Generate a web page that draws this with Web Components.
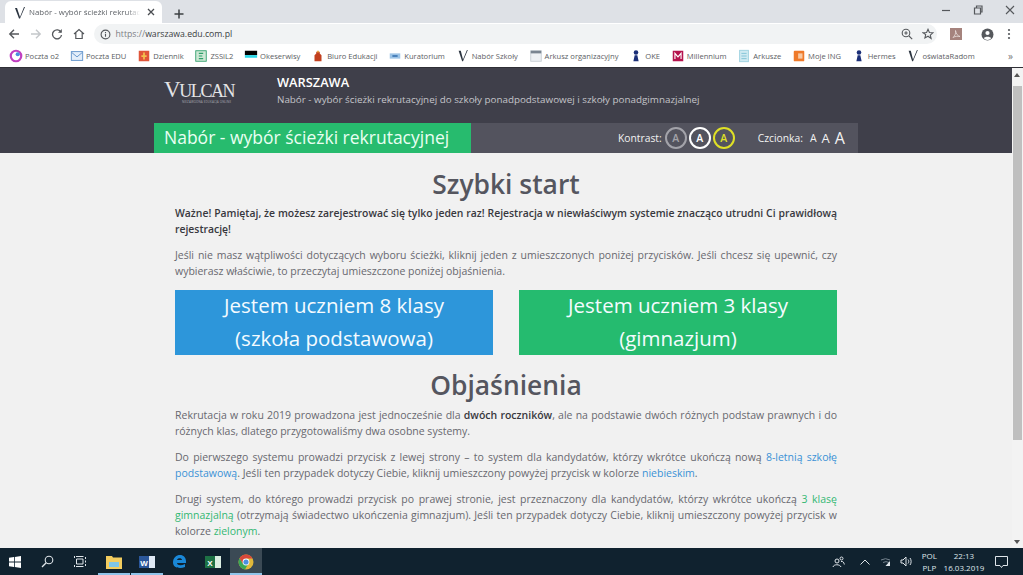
<!DOCTYPE html>
<html lang="pl">
<head>
<meta charset="utf-8">
<title>Nabór - wybór ścieżki rekrutacyjnej</title>
<style>
  html, body { margin: 0; height: 100%; overflow: hidden; }
  body { display: flex; flex-direction: column; height: 575px; font-family: "Open Sans", sans-serif; background: #f1f1f1; }
  page-main { flex: 1; min-height: 0; }
</style>
</head>
<body>
<browser-chrome></browser-chrome>
<page-main>
  <site-header></site-header>
  <article-body></article-body>
</page-main>
<task-bar></task-bar>

<script>
const vLogo = `<svg width="12" height="13" viewBox="0 0 12 13"><path d="M1 2 L3 2 L6 11 L10 1 L11 1 L6 12.5 L5 12.5 Z" fill="#2b3440"/></svg>`;

const bookmarks = [
  ["Poczta o2", `<circle cx="8" cy="8" r="6" fill="none" stroke="#c03fc0" stroke-width="2.5"/><circle cx="10" cy="6" r="2.4" fill="#4a8fe0"/>`],
  ["Poczta EDU", `<rect x="1.5" y="3" width="13" height="10" fill="#e3eefa" stroke="#5b8fc8"/><path d="M2 4l6 5 6-5" fill="none" stroke="#5b8fc8"/>`],
  ["Dziennik", `<rect x="2" y="2" width="12" height="12" fill="#e0553a"/><path d="M8 4v8M5 8h6" stroke="#f2c14e" stroke-width="2"/>`],
  ["ZSSiL2", `<rect x="2" y="2" width="12" height="12" fill="#cfe8d6" stroke="#2f9e6a"/><path d="M5.500 5h5M5.500 8h4M5.500 11h5" stroke="#2f9e6a" stroke-width="1.300"/>`],
  ["Okeserwisy", `<rect x="1" y="2" width="14" height="5" fill="#000"/><rect x="1" y="7" width="14" height="3" fill="#29d6e6"/>`],
  ["Biuro Edukacji", `<path d="M4 14V7l2-2V3h4v2l2 2v7z" fill="#c2401f"/><rect x="7" y="2" width="2" height="2" fill="#e8a33c"/>`],
  ["Kuratorium", `<rect x="2" y="5" width="12" height="6" fill="#9cc3e6"/><rect x="5" y="7" width="6" height="2" fill="#3f78b5"/>`],
  ["Nabór Szkoły", `<path d="M3 2 L5.500 2 L8 12 L12.500 1 L13.500 1 L8 14 L7 14 Z" fill="#2b3440"/>`],
  ["Arkusz organizacyjny", `<rect x="2" y="2" width="12" height="12" fill="#eef1f4" stroke="#c5ccd3"/><rect x="2" y="2" width="12" height="3" fill="#7a8591"/>`],
  ["OKE", `<circle cx="8" cy="4" r="2.600" fill="#1b2f78"/><path d="M5 14l1.500-7h3L11 14z" fill="#1b2f78"/>`],
  ["Millennium", `<rect x="2" y="2" width="12" height="12" fill="#b5134d"/><path d="M4.500 11.500V5l3.500 4 3.500-4v6.500" fill="none" stroke="#fff" stroke-width="1.300"/>`],
  ["Arkusze", `<rect x="3" y="1.500" width="10" height="13" fill="#cfeaf2" stroke="#9ad0df"/><path d="M5 5h6M5 8h6M5 11h6" stroke="#7cc0d4"/>`],
  ["Moje ING", `<rect x="2" y="2" width="12" height="12" rx="1" fill="#ef7a2a"/><rect x="7" y="5" width="5" height="6" fill="#f8c9a3"/>`],
  ["Hermes", `<circle cx="8" cy="4" r="2.600" fill="#1b2f78"/><path d="M5 14l1.500-7h3L11 14z" fill="#1b2f78"/>`],
  ["oświataRadom", `<path d="M3 2 L5.500 2 L8 12 L12.500 1 L13.500 1 L8 14 L7 14 Z" fill="#2b3440"/>`],
];

class BrowserChrome extends HTMLElement {
  constructor() {
    super();
    this.attachShadow({ mode: "open" });
  }

  connectedCallback() {
    const marks = bookmarks.map(([name, icon]) => `
      <span class="mark"><svg width="14" height="14" viewBox="0 0 16 16">${icon}</svg>${name}</span>`).join("");
    this.shadowRoot.innerHTML = `
      <style>
        :host { display: block; flex: none; font-family: "Open Sans", sans-serif; color: #4b4f54; }
        .tabs { height: 23px; background: #dee1e6; display: flex; align-items: flex-end; padding-left: 5px; }
        .tab { width: 157px; height: 22px; box-sizing: border-box; background: #fff; border-radius: 6px 6px 0 0; display: flex; align-items: center; padding: 0 5px 0 9px; font-size: 7.900px; color: #5f6368; white-space: nowrap; }
        .tab .fav { flex: none; margin-right: 3px; display: flex; }
        .tab .title { flex: 1; overflow: hidden; -webkit-mask-image: linear-gradient(to right, #000 88%, transparent); mask-image: linear-gradient(to right, #000 88%, transparent); }
        .tab .close { flex: none; margin-left: 5px; display: flex; }
        .plus { margin: 0 0 3px 11px; display: flex; }
        .win { margin: 0 6px 3px auto; display: flex; gap: 22px; align-items: center; height: 20px; padding-right: 2px; }
        .tools { height: 22px; background: #fff; display: flex; align-items: center; padding: 0 12px 0 8px; }
        .nav { display: flex; gap: 9.500px; align-items: center; }
        .omni { flex: 1; height: 20px; margin-left: 9px; background: #f1f3f4; border-radius: 10px; display: flex; align-items: center; padding: 0 3px 0 6px; font-size: 8.700px; color: #7c8085; }
        .omni b { font-weight: 400; color: #3a3d41; }
        .omni svg.info { margin-right: 5px; }
        .omni .right { margin-left: auto; display: flex; gap: 9px; align-items: center; }
        .ext { display: flex; align-items: center; margin-left: 13px; }
        .ext .pdf { margin-right: 19px; }
        .ext .acct { margin-right: 13px; }
        .marks { height: 22px; background: #fff; display: flex; align-items: center; padding-left: 9px; font-size: 7.600px; color: #5c6064; white-space: nowrap; position: relative; border-bottom: 1px solid #2f2f36; overflow: hidden; }
        .mark { display: flex; align-items: center; gap: 2px; margin-right: 10.750px; }
        .mark svg { flex: none; }
        .more { position: absolute; right: 10px; top: 4px; font-size: 10px; color: #777; }
      </style>
      <div class="tabs">
        <div class="tab">
          <span class="fav">${vLogo}</span>
          <span class="title">Nabór - wybór ścieżki rekrutacyjnej</span>
          <span class="close"><svg width="12" height="12" viewBox="0 0 12 12"><path d="M3 3l6 6M9 3l-6 6" stroke="#4a4d51" stroke-width="1.300"/></svg></span>
        </div>
        <span class="plus"><svg width="12" height="12" viewBox="0 0 12 12"><path d="M6 1.500v9M1.500 6h9" stroke="#3c4043" stroke-width="1.500"/></svg></span>
        <span class="win">
          <svg width="10" height="10" viewBox="0 0 10 10"><path d="M1 5.500h8" stroke="#55585c" stroke-width="1.200"/></svg>
          <svg width="10" height="10" viewBox="0 0 10 10"><path d="M1.500 3h6v6h-6zM3.500 3V1h5.500v6h-1.500" fill="none" stroke="#55585c" stroke-width="1.200"/></svg>
          <svg width="10" height="10" viewBox="0 0 10 10"><path d="M1 1l8 8M9 1l-8 8" stroke="#55585c" stroke-width="1.100"/></svg>
        </span>
      </div>
      <div class="tools">
        <span class="nav">
          <svg width="12" height="12" viewBox="0 0 12 12"><path d="M11 6H2M6 1.800L1.800 6 6 10.200" fill="none" stroke="#55585c" stroke-width="1.400"/></svg>
          <svg width="12" height="12" viewBox="0 0 12 12"><path d="M1 6h9M6 1.800L10.200 6 6 10.200" fill="none" stroke="#c4c7ca" stroke-width="1.400"/></svg>
          <svg width="12" height="12" viewBox="0 0 12 12"><path d="M10 4.200A4.500 4.500 0 1 0 10.500 7" fill="none" stroke="#55585c" stroke-width="1.300"/><path d="M10.800 1v3.800H7z" fill="#55585c"/></svg>
          <svg width="12" height="12" viewBox="0 0 12 12"><path d="M1 6l5-4.500L11 6M2.800 5v5.500h6.400V5" fill="none" stroke="#55585c" stroke-width="1.200"/></svg>
        </span>
        <div class="omni">
          <svg class="info" width="11" height="11" viewBox="0 0 12 12"><circle cx="6" cy="6" r="4.800" fill="none" stroke="#55585c" stroke-width="1.200"/><path d="M6 5.300v3.200M6 3.300v1" stroke="#55585c" stroke-width="1.200"/></svg>
          <span>https://<b>warszawa.edu.com.pl</b></span>
          <span class="right">
            <svg width="12" height="12" viewBox="0 0 12 12"><circle cx="5" cy="5" r="3.800" fill="none" stroke="#55585c" stroke-width="1.100"/><path d="M8 8l3.200 3.200M3.300 5h3.400M5 3.300v3.400" stroke="#55585c" stroke-width="1.100"/></svg>
            <svg width="12" height="12" viewBox="0 0 12 12"><path d="M6 1.300l1.400 3.200 3.500.3-2.600 2.300.8 3.400L6 8.200 2.900 10l.8-3.400L1.100 4.800l3.500-.3z" fill="none" stroke="#55585c" stroke-width="1.100"/></svg>
          </span>
        </div>
        <span class="ext">
          <svg class="pdf" width="12" height="12" viewBox="0 0 12 12"><rect width="12" height="12" fill="#a5837d"/><path d="M3 9.500C5 8 6 5 5.500 2.500 6 6 8 8 10 8.500 7.500 8 5 8.300 3 9.500z" fill="none" stroke="#eadfdc" stroke-width=".800"/></svg>
          <svg class="acct" width="13" height="13" viewBox="0 0 13 13"><circle cx="6.500" cy="6.500" r="6" fill="#55585c"/><circle cx="6.500" cy="5" r="2.100" fill="#fff"/><path d="M2.800 10.300c1-2 6.400-2 7.400 0a5 5 0 0 1-7.400 0z" fill="#fff"/></svg>
          <svg width="4" height="12" viewBox="0 0 4 12"><circle cx="2" cy="2" r="1.100" fill="#55585c"/><circle cx="2" cy="6" r="1.100" fill="#55585c"/><circle cx="2" cy="10" r="1.100" fill="#55585c"/></svg>
        </span>
      </div>
      <div class="marks">${marks}<span class="more">»</span></div>
    `;
  }
}

class SiteHeader extends HTMLElement {
  constructor() {
    super();
    this.attachShadow({ mode: "open" });
  }

  connectedCallback() {
    this.shadowRoot.innerHTML = `
      <style>
        :host { display: block; background: #3f3f4a; color: #fff; font-family: "Open Sans", sans-serif; }
        .wrap { width: 704px; margin-left: 154px; }
        .top { height: 55px; display: flex; align-items: flex-start; }
        .logo { width: 123px; padding: 10px 0 0 10px; box-sizing: border-box; font-family: "Liberation Serif", serif; color: #e4e4e6; line-height: 1; }
        .logo .name { font-size: 18px; letter-spacing: -1.400px; white-space: nowrap; display: block; }
        .logo .name big { font-size: 23px; }
        .logo .tag { font-size: 3px; letter-spacing: .1px; font-family: "Open Sans", sans-serif; color: #a9a9b0; display: block; white-space: nowrap; margin: 0 0 0 18px; }
        .city { font-size: 12.800px; font-weight: 600; margin: 6px 0 0; line-height: 17px; }
        .sub { font-size: 9.830px; color: #c4c4c9; margin: 1px 0 0; line-height: 15px; white-space: nowrap; }
        .bar { height: 30px; display: flex; background: #53535e; }
        .title { width: 317px; background: #27bb6e; font-size: 17.500px; padding-left: 10px; box-sizing: border-box; line-height: 29px; white-space: nowrap; color: #e9fff2; }
        .tools { flex: 1; display: flex; align-items: center; font-size: 10.300px; padding-left: 147px; color: #f2f2f2; }
        .dot { width: 18px; height: 18px; border-radius: 50%; border: 2px solid; display: flex; align-items: center; justify-content: center; font-size: 10.500px; font-weight: 600; margin-left: 2px; }
        .k1 { margin-left: 3px; color: #a3a3aa; }
        .k2 { color: #fff; }
        .k3 { color: #dfe026; }
        .czc { margin: 0 2px 0 23px; }
        .a { margin-left: 5px; line-height: 1; }
      </style>
      <div class="wrap">
        <div class="top">
          <div class="logo"><span class="name"><big>V</big>ULCAN</span><span class="tag">NIEZAWODNA EDUKACJA ONLINE</span></div>
          <div>
            <p class="city">WARSZAWA</p>
            <p class="sub">Nabór - wybór ścieżki rekrutacyjnej do szkoły ponadpodstawowej i szkoły ponadgimnazjalnej</p>
          </div>
        </div>
        <div class="bar">
          <div class="title">Nabór - wybór ścieżki rekrutacyjnej</div>
          <div class="tools">
            <span>Kontrast:</span>
            <span class="dot k1">A</span><span class="dot k2">A</span><span class="dot k3">A</span>
            <span class="czc">Czcionka:</span>
            <span class="a" style="font-size:10.500px">A</span>
            <span class="a" style="font-size:13px">A</span>
            <span class="a" style="font-size:16px">A</span>
          </div>
        </div>
      </div>
    `;
  }
}

class ChoiceButton extends HTMLElement {
  constructor() {
    super();
    this.attachShadow({ mode: "open" });
  }

  connectedCallback() {
    this.shadowRoot.innerHTML = `
      <style>
        :host { display: block; background: var(--bg); color: #f4fbff; text-align: center; font-size: 20.500px; line-height: 32.500px; height: 65px; overflow: hidden; }
        .label { margin-top: -1px; }
      </style>
      <div class="label"><slot></slot></div>
    `;
  }
}

class ArticleBody extends HTMLElement {
  constructor() {
    super();
    this.attachShadow({ mode: "open" });
  }

  connectedCallback() {
    this.shadowRoot.innerHTML = `
      <style>
        :host { display: block; font-family: "Open Sans", sans-serif; color: #68686f; font-size: 10.500px; line-height: 16px; }
        .col { width: 662px; margin-left: 175px; }
        h1 { margin: 0; text-align: center; font-size: 26.400px; font-weight: 600; color: #55565f; line-height: 36px; }
        h1.first { padding-top: 13px; }
        h1.second { margin-top: 12px; }
        p { margin: 0 0 10px; text-align: justify; }
        p.strong { font-weight: 600; font-size: 10.400px; color: #38383e; margin-top: 3px; }
        p b { font-weight: 600; color: #38383e; }
        .btns { display: grid; grid-template-columns: 318px 318px; column-gap: 26px; margin-top: 11px; }
        a { text-decoration: none; }
        .blue { color: #3b92d6; }
        .green { color: #33b873; }
        p.after { margin-top: 4px; }
      </style>
      <div class="col">
        <h1 class="first">Szybki start</h1>
        <p class="strong">Ważne! Pamiętaj, że możesz zarejestrować się tylko jeden raz! Rejestracja w niewłaściwym systemie znacząco utrudni Ci prawidłową rejestrację!</p>
        <p>Jeśli nie masz wątpliwości dotyczących wyboru ścieżki, kliknij jeden z umieszczonych poniżej przycisków. Jeśli chcesz się upewnić, czy wybierasz właściwie, to przeczytaj umieszczone poniżej objaśnienia.</p>
        <div class="btns">
          <choice-button style="--bg:#2d96da">Jestem uczniem 8 klasy<br>(szkoła podstawowa)</choice-button>
          <choice-button style="--bg:#25bb6f">Jestem uczniem 3 klasy<br>(gimnazjum)</choice-button>
        </div>
        <h1 class="second">Objaśnienia</h1>
        <p class="after">Rekrutacja w roku 2019 prowadzona jest jednocześnie dla <b>dwóch roczników</b>, ale na podstawie dwóch różnych podstaw prawnych i do różnych klas, dlatego przygotowaliśmy dwa osobne systemy.</p>
        <p>Do pierwszego systemu prowadzi przycisk z lewej strony – to system dla kandydatów, którzy wkrótce ukończą nową <a class="blue">8-letnią szkołę podstawową</a>. Jeśli ten przypadek dotyczy Ciebie, kliknij umieszczony powyżej przycisk w kolorze <a class="blue">niebieskim</a>.</p>
        <p>Drugi system, do którego prowadzi przycisk po prawej stronie, jest przeznaczony dla kandydatów, którzy wkrótce ukończą <a class="green">3 klasę gimnazjalną</a> (otrzymają świadectwo ukończenia gimnazjum). Jeśli ten przypadek dotyczy Ciebie, kliknij umieszczony powyżej przycisk w kolorze <a class="green">zielonym</a>.</p>
      </div>
    `;
  }
}

class PageMain extends HTMLElement {
  constructor() {
    super();
    this.attachShadow({ mode: "open" });
  }

  connectedCallback() {
    this.shadowRoot.innerHTML = `
      <style>
        :host { display: grid; grid-template-columns: 1fr 11px; overflow: hidden; }
        .page { min-width: 0; overflow: hidden; background: #f1f1f1; }
        .scroll { background: #f3f3f3; position: relative; }
        .thumb { position: absolute; top: 18px; left: 1px; right: 1px; height: 354px; background: #bfbfbf; }
        .up, .down { position: absolute; left: 2px; width: 0; height: 0; border-left: 3px solid transparent; border-right: 3px solid transparent; }
        .up { top: 5px; border-bottom: 4px solid #555; }
        .down { bottom: 4px; border-top: 4px solid #555; }
      </style>
      <div class="page"><slot></slot></div>
      <div class="scroll"><span class="up"></span><span class="thumb"></span><span class="down"></span></div>
    `;
  }
}

class TaskBar extends HTMLElement {
  constructor() {
    super();
    this.attachShadow({ mode: "open" });
  }

  connectedCallback() {
    this.shadowRoot.innerHTML = `
      <style>
        :host { display: flex; flex: none; height: 27px; background: #10222f; align-items: stretch; font-family: "Open Sans", sans-serif; color: #dfe5ea; }
        .slot { width: 33px; display: flex; align-items: center; justify-content: center; box-sizing: border-box; }
        .open { border-bottom: 2px solid #8fc4ea; padding-top: 2px; margin: 0 0.500px; width: 32px; }
        .active { background: #3b4a55; }
        .tray { margin-left: auto; display: flex; align-items: center; font-size: 8px; line-height: 12px; text-align: center; }
        .tray span.ic { display: flex; }
        .lang { margin: 0 8px 0 10px; }
        .time { width: 38px; margin-right: 12px; white-space: nowrap; display: flex; flex-direction: column; align-items: center; }
      </style>
      <span class="slot" style="width:30px"><svg width="12" height="12" viewBox="0 0 12 12"><path d="M0 1.700L5 1v4.600H0zM5.800.9L12 0v5.600H5.800zM0 6.400h5V11L0 10.300zM5.800 6.400H12V12L5.800 11.100z" fill="#fff"/></svg></span>
      <span class="slot" style="margin-left:1px"><svg width="13" height="13" viewBox="0 0 13 13"><circle cx="8" cy="5" r="3.800" fill="none" stroke="#dfe5ea" stroke-width="1.100"/><path d="M5.200 7.800L1 12" stroke="#dfe5ea" stroke-width="1.300"/></svg></span>
      <span class="slot"><svg width="13" height="11" viewBox="0 0 13 11"><path d="M2.500 3h6.500v5H2.500z" fill="none" stroke="#dfe5ea"/><path d="M.5 0v2M2 .5h7.500M.5 9v2M2 10.500h7.500M11.500 1v2M11.500 4.500v2M11.500 8v2" stroke="#dfe5ea"/></svg></span>
      <span class="slot open"><svg width="16" height="14" viewBox="0 0 16 14"><path d="M0 1h6l1 1.500h9V14H0z" fill="#f3cd5f"/><rect x="3" y="7" width="10" height="5" fill="#7fc6e8"/></svg></span>
      <span class="slot open"><svg width="16" height="14" viewBox="0 0 16 14"><rect x="5" y="1" width="11" height="12" fill="#dfe9f5"/><rect y="1" width="10" height="12" fill="#2b579a"/><text x="5" y="10.500" font-family="Liberation Sans" font-size="8" font-weight="700" fill="#fff" text-anchor="middle">W</text></svg></span>
      <span class="slot"><svg width="15" height="15" viewBox="0 0 15 15"><path d="M1 8.500C1 3.500 4.500 1 8 1c3.500 0 6 2.500 6 6.500v1.500H5c.3 2.500 4 3 8 1v3c-5 2-12 1-12-4.500zM5 6h5C10 3.700 5.500 3.700 5 6z" fill="#1a88d8"/></svg></span>
      <span class="slot"><svg width="16" height="14" viewBox="0 0 16 14"><rect x="5" y="1" width="11" height="12" fill="#dbeee2"/><rect y="1" width="10" height="12" fill="#1e7145"/><text x="5" y="10.500" font-family="Liberation Sans" font-size="8" font-weight="700" fill="#fff" text-anchor="middle">X</text></svg></span>
      <span class="slot open active"><svg width="16" height="16" viewBox="0 0 16 16"><circle cx="8" cy="8" r="7.500" fill="#e0b83a"/><path d="M8 .5A7.500 7.500 0 0 0 1.500 4.300L4.800 9.800 8 4.500h6.500A7.500 7.500 0 0 0 8 .5z" fill="#d9473b"/><path d="M1.500 4.300A7.500 7.500 0 0 0 7 15.400l3.300-5.600H4.800z" fill="#3aa757"/><circle cx="8" cy="8" r="3.400" fill="#fff"/><circle cx="8" cy="8" r="2.600" fill="#4a8fe0"/></svg></span>
      <div class="tray">
        <span class="ic" style="margin-right:15px"><svg width="13" height="12" viewBox="0 0 13 12"><circle cx="5" cy="5" r="2" fill="none" stroke="#dfe5ea"/><path d="M1 11c.5-3 7-3 8 0" fill="none" stroke="#dfe5ea"/><circle cx="9.500" cy="2.500" r="1.500" fill="none" stroke="#dfe5ea"/><path d="M9 5.500c2-.5 3 1 3.300 3" fill="none" stroke="#dfe5ea"/></svg></span>
        <span class="ic" style="margin-right:10px"><svg width="10" height="6" viewBox="0 0 10 6"><path d="M.5 5.500L5 1l4.500 4.500" fill="none" stroke="#dfe5ea"/></svg></span>
        <span class="ic" style="margin-right:9px"><svg width="11" height="11" viewBox="0 0 11 11"><path d="M1 4a9 9 0 0 1 9 0M3 6.500a6 6 0 0 1 6 0" fill="none" stroke="#76848f"/><path d="M10 10H5.500L10 5z" fill="#dfe5ea"/></svg></span>
        <span class="ic"><svg width="12" height="11" viewBox="0 0 12 11"><path d="M1 4h2l3-3v9L3 7H1z" fill="none" stroke="#dfe5ea"/><path d="M8 3.500c1 1 1 3 0 4M10 2c1.500 2 1.500 5 0 7" fill="none" stroke="#dfe5ea"/></svg></span>
        <span class="lang">POL<br>PLP</span>
        <span class="time"><span>22:13</span><span>16.03.2019</span></span>
        <span class="ic" style="margin-right:15px"><svg width="13" height="12" viewBox="0 0 13 12"><path d="M.5.500h12v9H8L6.500 11.500 5 9.500H.5z" fill="none" stroke="#dfe5ea"/></svg></span>
      </div>
    `;
  }
}

customElements.define("browser-chrome", BrowserChrome);
customElements.define("site-header", SiteHeader);
customElements.define("choice-button", ChoiceButton);
customElements.define("article-body", ArticleBody);
customElements.define("page-main", PageMain);
customElements.define("task-bar", TaskBar);
</script>
</body>
</html>
